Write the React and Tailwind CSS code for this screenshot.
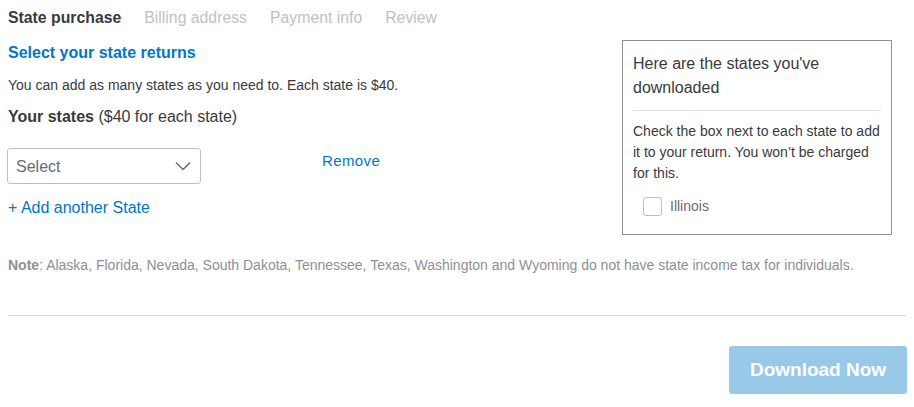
const tabs = ["Billing address", "Payment info", "Review"];

const ChevronDown = () => (
	<svg
		width="16"
		height="10"
		viewBox="0 0 16 10"
		fill="none"
		stroke="#6b6c72"
		strokeWidth="1.5"
	>
		<path d="M1 1.5l7 7 7-7" />
	</svg>
);

export default function App() {
	return (
		<div className="w-[914px] h-[407px] bg-white text-[#393a3d] font-['Liberation_Sans',Arial,sans-serif] relative">
			{/* tabs */}
			<div className="flex flex-row items-center gap-[23px] pl-[8px] pt-[8px] h-[28px] text-[15.8px] leading-[20px]">
				<span className="font-bold text-[#393a3d]">State purchase</span>
				{tabs.map((t) => (
					<span key={t} className="text-[#c0c1c5]">
						{t}
					</span>
				))}
			</div>

			<div className="flex flex-row pl-[8px] pr-[22px]">
				<div className="flex-1">
					<h2 className="mt-[15px] text-[16px] leading-[20px] font-bold text-[#0077c5]">
						Select your state returns
					</h2>
					<p className="mt-[13px] text-[14px] leading-[18px] text-[#393a3d]">
						You can add as many states as you need to. Each state is $40.
					</p>
					<p className="mt-[13px] text-[16px] leading-[20px]">
						<span className="font-bold">Your states</span> ($40 for each state)
					</p>

					<div className="flex flex-row items-center mt-[21px]">
						<div className="w-[194px] h-[36px] -ml-[1px] border border-[#babec5] rounded-[3px] flex flex-row items-center justify-between pl-[8px] pr-[9px]">
							<span className="text-[16px] text-[#6b6c72] mt-[1px]">Select</span>
							<ChevronDown />
						</div>
						<span className="ml-[121px] -mt-[10px] text-[15px] tracking-[0.4px] text-[#0077c5]">
							Remove
						</span>
					</div>

					<p className="mt-[14px] text-[16px] leading-[20px] text-[#0077c5]">
						+ Add another State
					</p>
				</div>

				<div className="w-[270px] mt-[12px] border border-[#8d9096] px-[10px] pt-[11px] h-[195px]">
					<p className="text-[16px] leading-[24px] text-[#393a3d]">
						Here are the states you've downloaded
					</p>
					<div className="mt-[10px] border-t border-[#e0e1e3]" />
					<p className="mt-[10px] text-[14px] leading-[21px] text-[#393a3d]">
						Check the box next to each state to add it to your return. You won’t be charged for this.
					</p>
					<label className="mt-[12px] ml-[10px] flex flex-row items-center gap-[8px]">
						<span className="w-[19px] h-[19px] border border-[#babec5] rounded-[3px] bg-white" />
						<span className="text-[14px] text-[#6b6c72]">Illinois</span>
					</label>
				</div>
			</div>

			<p className="mt-[22px] pl-[8px] text-[14px] leading-[16px] text-[#8d9096]">
				<span className="font-bold">Note</span>: Alaska, Florida, Nevada, South Dakota, Tennessee, Texas, Washington and Wyoming do not have state income tax for individuals.
			</p>

			<div className="mt-[42px] mx-[8px] border-t border-[#d4d7dc]" />

			<div className="flex flex-row justify-end pr-[7px] mt-[30px]">
				<button className="w-[178px] h-[48px] rounded-[3px] bg-[#99c9e8] text-white font-bold text-[19px]">
					Download Now
				</button>
			</div>
		</div>
	);
}
